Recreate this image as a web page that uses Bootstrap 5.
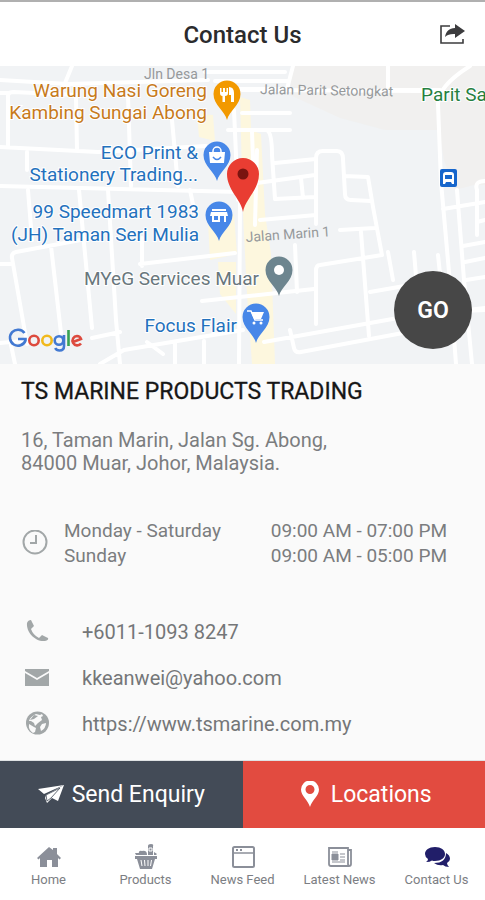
<!DOCTYPE html>
<html lang="en">
<head>
<meta charset="utf-8">
<meta name="viewport" content="width=device-width, initial-scale=1">
<title>Contact Us</title>
<link href="https://cdn.jsdelivr.net/npm/bootstrap@5.3.0/dist/css/bootstrap.min.css" rel="stylesheet">
<style>
  body { font-family: Roboto, "Liberation Sans", sans-serif; background: #fafafa; color: #7b7d7f; font-size: 19px; line-height: 23px; }
  a { color: inherit; text-decoration: none; }
  svg { display: block; flex: none; }
  .app-header { height: 66px; border-top: 2px solid #b0b0b0; padding: 2px 18px 0; background: #fff; color: #2b2b2d; display: grid; grid-template-columns: 28px 1fr 28px; }
  .app-header h1 { font-size: 24px; line-height: 30px; font-weight: 500; }
  .icon-button { border: 0; background: none; padding: 0; color: #3c3c3e; }
  .map-area { height: 298px; overflow: hidden; background: #f1f3f5; }
  .map-art { width: 100%; height: 100%; }
  .poi { font-size: 19px; text-anchor: end; }
  .street { font-size: 14px; fill: #96999b; }
  .go-button { right: 13px; bottom: 15px; width: 78px; height: 78px; border: 0; border-radius: 50%; background: #474747; color: #fff; font-size: 23px; font-weight: 600; }
  .place-info { padding: 16px 21px 26px; }
  .place-info h2 { font-size: 23px; line-height: 24px; font-weight: 400; color: #161616; margin-bottom: 25px; -webkit-text-stroke: .3px; }
  .place-info address { font-size: 20px; line-height: 23px; }
  .hours { padding: 17px 38px 41px 22px; gap: 16px; line-height: 25px; }
  .hours td { padding: 0; }
  .contacts { padding: 0 24px 12px; font-size: 20px; }
  .contacts a { height: 46px; gap: 32px; color: #747678; }
  .grey-icon { color: #a2a7a8; }
  .actions { height: 68px; border-top: 1px solid #dfe2e4; color: #fff; font-size: 23px; }
  .enquiry { background: #434b57; gap: 8px; color: #fff; }
  .locations { background: #e24b40; gap: 11px; color: #fff; padding-left: 4px; }
  .tab-bar { height: 72px; background: #fff; font-size: 13px; line-height: 16px; color: #7c7e83; padding-top: 16px; }
  .tab-bar a { gap: 2px; }
  .tab-bar svg { color: #8b8f99; }
  .tab-bar .active svg { color: #211e69; }
</style>
</head>
<body class="d-flex flex-column min-vh-100">
<header class="app-header align-items-center">
  <span></span>
  <h1 class="text-center m-0">Contact Us</h1>
  <button class="icon-button" type="button" aria-label="Share">
    <svg width="26" height="22" viewBox="0 0 26 22"><path d="M11 2H2v17h22v-4" fill="none" stroke="currentColor" stroke-width="1.600"/><path d="M16 0l10 7-10 7v-4c-5-.2-7 .5-10 3C7 7 10 4.500 16 4z" fill="currentColor"/></svg>
  </button>
</header>

<main class="flex-grow-1">
  <section class="map-area position-relative" aria-label="Map">
    <svg class="map-art" viewBox="0 66 485 298" preserveAspectRatio="xMidYMid slice">
      <defs>
        <path id="drop" d="M0 26C-2 17-13.500 11-13.500 0a13.500 13.500 0 0 1 27 0C13.500 11 2 17 0 26z"/>
      </defs>
      <path d="M292 66H485V185H474L455 190 444 160 439 130 385 130 340 118 290 95z" fill="#f1f0ef"/>
      <path d="M197 114l16 1 2 26-16-4zM208 222l26-8 3 40-27 6zM218 262h18v52l-16-20zM240 97l10 3 1 30 10 4 4 80 6 40 4 110h-23l-5-70-4-80z" fill="#fdf7de"/>
      <g fill="none" stroke="#fff" stroke-width="4" stroke-linejoin="round" stroke-linecap="round">
        <path d="M0 80l68 4 140-4M205 72h80M215 81h72M293 66l-6 23H225M388 66v24h52M242 90l180 1M0 93h10M8 146V96q0-4 5-4l65 3M72 66l-9 22M0 147l98 5M27 152v18M76 98l1 52M98 152l108-6M128 96l3 90M172 120l6 66M0 186l240 6M242 113h48M228 130h62"/>
        <path d="M240 200l-1 164M234 110l4 90M252 131l2 60M257 150l-2 75M267 130q5 3 5 25l3 44 40-2M275 163l41-4M257 183l58-8M301 178l2 20M316 224V158q0-7 7-7h14q6 0 6 8l2 35q0 6 6 6l20 1M344 176l24 1 5 30 9 48-62 10q-4 0-4 6v53M260 220l56-5M340 230l35-2M295 245l2 47M361 232l8 104"/>
        <path d="M0 264h11M27 344L12 258q-1-5 4-6l70-13M51 246l10 87M79 190l13 138M108 190l8 130 4 44M92 338l28-6M0 343l22-2M140 264l95-11M142 238v28M190 190l5 24M202 301l112-12M100 364l24-14 119-20M264 342l134-24 87-10M290 330l4 18q1 5 7 4l150-28M163 354l-16-12M175 342v22M204 341v23M370 292l80-14M388 252l5 28M414 252l2 24M438 255l3 28M11 345l4 19"/>
        <path d="M470 66q-32 20-32 38l3 78 8 90 7 92M457 190l7 90 8 84M443 209l42-7M477 235V190q-3-9 8-9M477 222l8-2M463 246l22-4M465 262l20-4M466 280l19-3M462 311l23-1M28 190l4 50"/>
      </g>
      <g class="street">
        <text x="144" y="79">Jln Desa 1</text>
        <text x="260" y="94" transform="rotate(1 260 94)">Jalan Parit Setongkat</text>
        <text x="246" y="242" transform="rotate(-4 246 242)">Jalan Marin 1</text>
      </g>
      <g class="poi" stroke="#fff" stroke-width="2" paint-order="stroke">
        <g fill="#c77a1b"><text x="207" y="97">Warung Nasi Goreng</text><text x="207" y="119">Kambing Sungai Abong</text></g>
        <g fill="#2371bd"><text x="198" y="159">ECO Print &amp;</text><text x="198" y="181">Stationery Trading...</text><text x="199" y="218">99 Speedmart 1983</text><text x="199" y="241">(JH) Taman Seri Mulia</text><text x="237" y="332">Focus Flair</text></g>
        <text x="259" y="285" fill="#69777d">MYeG Services Muar</text>
        <text x="421" y="101" fill="#26803f" style="text-anchor:start">Parit Sa</text>
      </g>
      <g transform="translate(227 94)"><use href="#drop" fill="#f29900"/><path d="M-7-6v5q0 3 2.500 3v6h2.500V2Q1 2 1-1v-5h-1.500v4h-1.500v-4h-2v4h-1.500v-4zM2-7q5 0 5 6v9H4V1H2z" fill="#fff"/></g>
      <g transform="translate(217 155)"><use href="#drop" fill="#4787e8"/><path d="M-8-3h16L7 8H-7z" fill="#fff"/><path d="M-4-2v-2a4 4 0 0 1 8 0v2" fill="none" stroke="#fff" stroke-width="1.500"/><path d="M-4 2q4 5 8 0" fill="none" stroke="#4787e8" stroke-width="1.500"/></g>
      <g transform="translate(219 215)"><use href="#drop" fill="#4787e8"/><path d="M-7-6H7v2H-7zM-8-3H8l1 4H7v6H5V1H1v6h-8V1h-2zM-5 1v4h4V1z" fill="#fff" fill-rule="evenodd"/></g>
      <g transform="translate(279 270)"><use href="#drop" fill="#6d858f"/><circle r="5" fill="#fff"/></g>
      <g transform="translate(256 317)"><use href="#drop" fill="#4787e8"/><path d="M-9-6h4l4 9H7" fill="none" stroke="#fff" stroke-width="1.500"/><path d="M-5-5H8L5 2h-7z" fill="#fff"/><circle cx="-2" cy="6" r="1.500" fill="#fff"/><circle cx="5" cy="6" r="1.500" fill="#fff"/></g>
      <path d="M243 212c-2-13-16-22-16-38a16 16 0 0 1 32 0c0 16-14 25-16 38z" fill="#e93d32"/><circle cx="243" cy="174" r="5.500" fill="#7a1410"/>
      <rect x="440" y="169" width="17" height="18" rx="2" fill="#1766cc"/><path d="M443 184v-9q0-3 3-3h5q3 0 3 3v9h-2l-1-2h-5l-1 2zM445 175v4h7v-4z" fill="#fff" fill-rule="evenodd"/>
      <g fill="none" stroke-width="2.600">
        <path d="M24.500 333a8 8 0 1 0 1 7.500V339H18" stroke="#4279d2"/><circle cx="34" cy="340.500" r="4.700" stroke="#dd4a3e"/><circle cx="47" cy="340.500" r="4.700" stroke="#f1b91c"/><circle cx="59" cy="340.500" r="4.300" stroke="#4279d2"/><path d="M64 335v11q0 4.500-4.500 4.500-3 0-4.300-2.500" stroke="#4279d2"/><path d="M68.500 330v16" stroke="#37a253"/><path d="M73 342l8-3q-1-3-4-3a4.700 4.700 0 1 0 4 7.500" stroke="#dd4a3e"/>
      </g>
    </svg>
    <button class="go-button position-absolute p-0" type="button">GO</button>
  </section>

  <section class="place-info">
    <h2>TS MARINE PRODUCTS TRADING</h2>
    <address class="m-0">16, Taman Marin, Jalan Sg. Abong,<br>84000 Muar, Johor, Malaysia.</address>
  </section>

  <section class="hours d-flex align-items-center">
    <svg class="grey-icon" width="26" height="26" viewBox="0 0 26 26" fill="none" stroke="currentColor" stroke-width="2"><circle cx="13" cy="12" r="11.500"/><path d="M14 5v8H8"/></svg>
    <table class="flex-grow-1">
      <tr><td>Monday - Saturday</td><td class="text-end">09:00 AM - 07:00 PM</td></tr>
      <tr><td>Sunday</td><td class="text-end">09:00 AM - 05:00 PM</td></tr>
    </table>
  </section>

  <section class="contacts">
    <a class="d-flex align-items-center" href="tel:+601110938247"><svg class="grey-icon" width="26" height="26" viewBox="0 0 26 26"><path d="M3 4q1-3 4-3l3 6-3 3q2 6 8 9l3-3 6 3q1 2-3 3C11 23 2 13 3 4z" fill="currentColor"/></svg>+6011-1093 8247</a>
    <a class="d-flex align-items-center" href="mailto:kkeanwei@yahoo.com"><svg class="grey-icon" width="26" height="26" viewBox="0 0 26 26" fill="currentColor"><path d="M1 4h24v2l-12 7L1 6zM1 8l12 7 12-7v13H1z"/></svg>kkeanwei@yahoo.com</a>
    <a class="d-flex align-items-center" href="https://www.tsmarine.com.my"><svg class="grey-icon" width="26" height="26" viewBox="0 0 26 26"><circle cx="13.500" cy="12" r="11.500" fill="currentColor"/><path d="M12 3l4 1 2-1 1 2-2 1 1 3-4 3-3 3-1-3-3-2-2 0q1-4 7-7zM5 13l5 3 2 1-1 4-2 1q-5-3-4-9zM18 13l4-1q0 5-5 8l-1-4z" fill="#fafafa"/><path d="M10 4L6 9l4-1 4-3z" fill="currentColor"/></svg>https://www.tsmarine.com.my</a>
  </section>
</main>

<div class="actions row g-0">
  <a class="enquiry col-6 d-flex align-items-center justify-content-center" href="#"><svg width="26" height="20" viewBox="0 0 26 20"><path d="M0 4L26 0 6 9zM8 10L26 0 20 16l-6-3-5 5-2-5z" fill="#fff"/><path d="M8 10l14-7-9 10-4 3z" fill="#fff" stroke="#434b57" stroke-width=".8"/></svg>Send Enquiry</a>
  <a class="locations col-6 d-flex align-items-center justify-content-center" href="#"><svg width="20" height="28" viewBox="0 0 20 28"><path d="M10 26C8 19 1 15 1 8.500a9 9 0 0 1 18 0C19 15 12 19 10 26zM10 4a4.500 4.500 0 1 0 0 9 4.500 4.500 0 0 0 0-9z" fill="#fff" fill-rule="evenodd"/></svg>Locations</a>
</div>

<nav class="tab-bar row row-cols-5 g-0" aria-label="Main">
  <a class="d-flex flex-column align-items-center" href="#"><svg width="26" height="26" viewBox="0 0 26 26" fill="currentColor"><path d="M1 14L13 3l4 3V4h4v6l4 4-1.500 1.500L22 14v9h-6v-7h-5v7H4v-9l-1.500 1.500z"/></svg>Home</a>
  <a class="d-flex flex-column align-items-center" href="#"><svg width="26" height="26" viewBox="0 0 26 26" fill="currentColor"><path d="M2 12h22v3h-2l-3 10H7L4 15H2zM15 2q0-2 3-2t2 2v9h-5zM6 11q-1-5 3-4 5-1 5 4zM2 9h4v2H3zM21 8l3 2-1 1h-2z"/><path d="M8 16l1 6M11.500 16l.5 6M15 16v6M18.500 16l-1 6M16 4h3v3h-3z" stroke="#fff" fill="none"/></svg>Products</a>
  <a class="d-flex flex-column align-items-center" href="#"><svg width="26" height="26" viewBox="0 0 26 26" fill="none" stroke="currentColor"><rect x="3" y="3" width="21" height="20" rx="1.500" stroke-width="2"/><path d="M3 9h21" stroke-width="1.500"/><path d="M6 6h2M10 6h2" stroke-width="2"/></svg>News Feed</a>
  <a class="d-flex flex-column align-items-center" href="#"><svg width="26" height="26" viewBox="0 0 26 26" fill="none" stroke="currentColor"><path d="M21 6h3v14q0 2-2 2H4q-2 0-2-2V4h19v16q0 2 1.500 2" stroke-width="1.800"/><path d="M5 10h6v6H5z" fill="currentColor"/><path d="M5 8h6M13 10h5M13 13h5M13 16h5M5 18h13" stroke-width="1"/></svg>Latest News</a>
  <a class="active d-flex flex-column align-items-center" href="#" aria-current="page"><svg width="26" height="26" viewBox="0 0 26 26" fill="currentColor"><path d="M11 3c6 0 10 3 10 7s-4 7-10 7q-2 0-3-.5Q6 18 2 18q2-1 2-3-3-2-3-5c0-4 4-7 10-7z"/><path d="M22 9q4 2 4 6 0 2-3 4 0 2 2 4-4 0-6-2-5 1-9-2 12 0 12-10z"/></svg>Contact Us</a>
</nav>
<script src="https://cdn.jsdelivr.net/npm/bootstrap@5.3.0/dist/js/bootstrap.bundle.min.js"></script>
</body>
</html>
